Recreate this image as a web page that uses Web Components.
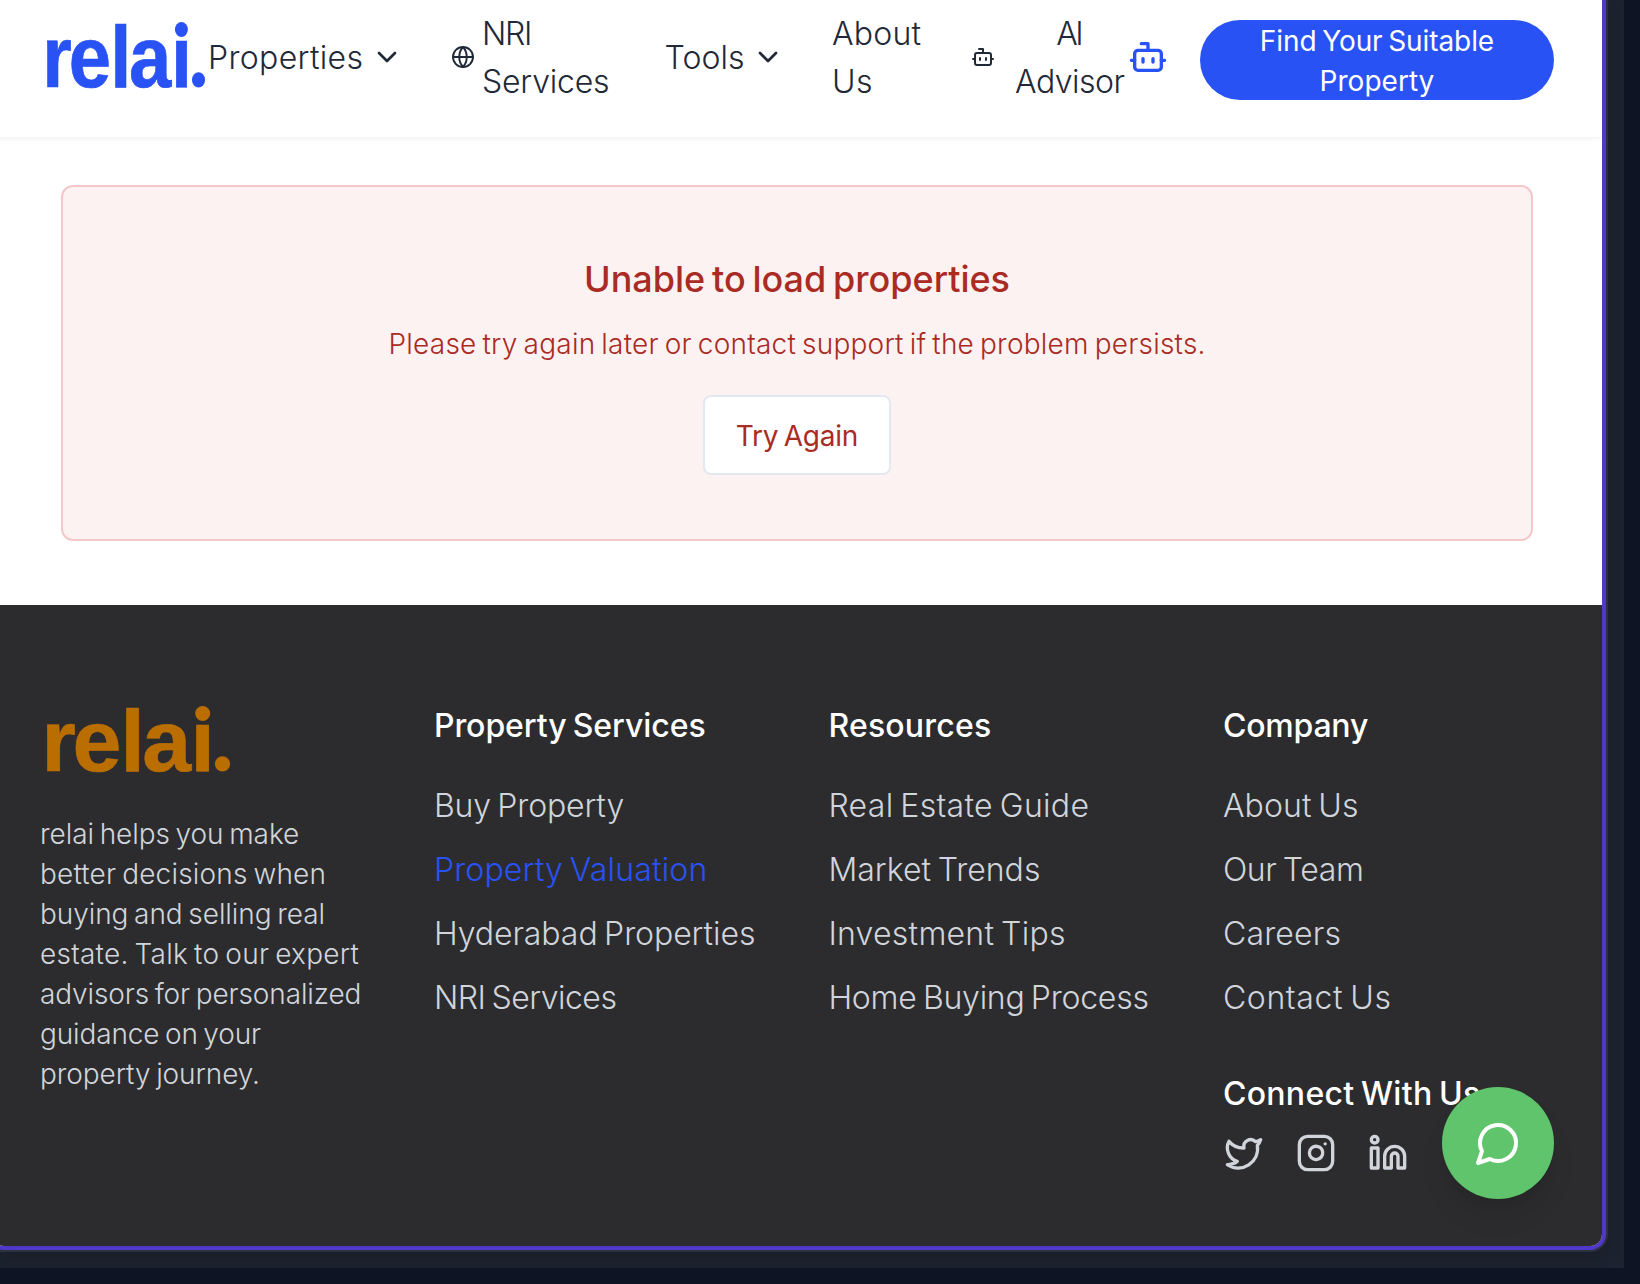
<!DOCTYPE html>
<html lang="en">
<head>
<meta charset="utf-8">
<title>relai.</title>
<style>
  body { margin: 0; background: #0e1423; overflow: hidden; font-family: Inter, "Noto Sans", sans-serif; }
</style>
</head>
<body>
<app-window>
  <site-header></site-header>
  <error-card></error-card>
  <site-footer></site-footer>
  <chat-button></chat-button>
</app-window>

<script>
const define = (name, html, after) => customElements.define(name, class extends HTMLElement {
  connectedCallback() {
    if (this.shadowRoot) return;
    this.attachShadow({ mode: 'open' }).innerHTML = html;
    if (after) after(this);
  }
});

/* One line of text with tight word gaps, tracked so that its drawn width equals the "ink" attribute. */
const WORD_GAP = 0.075;
const ctx = document.createElement('canvas').getContext('2d');
define('fit-text', `<style>
  :host { display: block; white-space: nowrap; font-kerning: normal; word-spacing: -${WORD_GAP}em; transform: translateY(var(--shift, 1px)); }
</style><slot></slot>`, el => {
  const cs = getComputedStyle(el), text = el.textContent;
  ctx.font = `${cs.fontWeight} ${cs.fontSize} Inter`;
  const m = ctx.measureText(text);
  const gaps = (text.split(' ').length - 1) * WORD_GAP * parseFloat(cs.fontSize);
  const ink = m.actualBoundingBoxLeft + m.actualBoundingBoxRight - gaps;
  el.style.letterSpacing = ((el.getAttribute('ink') - ink) / (text.length - 1)).toFixed(3) + 'px';
  el.style.marginRight = (-parseFloat(el.style.letterSpacing)).toFixed(3) + 'px';
});

const icons = {
  chevron: '<path d="m6 9 6 6 6-6"/>',
  globe: '<circle cx="12" cy="12" r="10"/><path d="M12 2c-5 5.6-5 14.4 0 20c5-5.6 5-14.4 0-20"/><path d="M2 12h20"/>',
  bot: '<path d="M12 8V4H8"/><rect width="16" height="12" x="4" y="8" rx="2"/><path d="M2 14h2M20 14h2M15 13v2M9 13v2"/>',
  twitter: '<path d="M22 4s-.7 2.1-2 3.4c1.6 10-9.4 17.3-18 11.6 2.2.1 4.4-.6 6-2C3 15.5.5 9.6 3 5c2.2 2.6 5.6 4.1 9 4-.9-4.2 4-6.6 7-3.8 1.1 0 3-1.2 3-1.2z"/>',
  instagram: '<rect width="20" height="20" x="2" y="2" rx="5"/><path d="M16 11.37A4 4 0 1 1 12.63 8 4 4 0 0 1 16 11.37z"/><path d="M17.5 6.5h.01"/>',
  linkedin: '<path d="M16 8a6 6 0 0 1 6 6v7h-4v-7a2 2 0 0 0-4 0v7h-4v-7a6 6 0 0 1 6-6z"/><rect width="4" height="12" x="2" y="9"/><circle cx="4" cy="4" r="2"/>',
  message: '<path d="M7.9 20A9 9 0 1 0 4 16.1L2 22Z"/>'
};
define('line-icon', '<style>:host{display:block;flex:none}svg{display:block}</style>', el => {
  const s = el.getAttribute('size');
  el.shadowRoot.innerHTML += `<svg width="${s}" height="${s}" viewBox="0 0 24 24" fill="none" stroke="currentColor"
    stroke-width="${el.getAttribute('stroke') || 2}" stroke-linecap="round" stroke-linejoin="round">${icons[el.getAttribute('name')]}</svg>`;
});

/* The wordmark: the i's square dot is clipped away and a round one is drawn in its place. */
define('brand-logo', `<style>
  :host { display: block; flex: none; height: 68px; }
  svg { display: block; width: 100%; height: 100%; overflow: visible; fill: currentColor; }
  text { font: 700 88px "Liberation Sans", sans-serif; stroke: currentColor; stroke-width: .7px; }
  .stop { font-size: 60px; stroke: none; }
</style>
<svg viewBox="0 0 184 68" preserveAspectRatio="none">
  <clipPath id="body"><path d="M-10 -10H147V18H200V80H-10Z"/></clipPath>
  <g clip-path="url(#body)"><text x="-4.4 26.4 74.4 96.2 144.6 168" y="65 65 65 65 65 62">relai<tspan class="stop">.</tspan></text></g>
  <circle cx="156.7" cy="7.5" r="7.5"/><circle cx="176.5" cy="57.8" r="7.6"/>
</svg>`);

define('nav-item', `<style>
  :host { display: flex; align-items: center; flex: none; line-height: 48px; }
</style><slot></slot>`);

define('site-header', `<style>
  :host { display: flex; align-items: center; box-sizing: border-box; height: 137px; padding: 0 0 23px 54px;
    color: #1f2937; font-size: 32px; font-weight: 330; background: #fff; box-shadow: 0 1px 5px rgba(0,0,0,.07); position: relative; }
  brand-logo { width: 159px; color: #2952f5; margin: -2px 3px 0 0; }
  .center { text-align: center; }
  .blue { color: #2952f5; }
  button { display: flex; flex-direction: column; align-items: center; flex: none; width: 354px; height: 80px; margin: 6px 0 0 32px;
    padding: 0; border: 0; border-radius: 40px; background: #2952f5; color: #fff; font: 400 28px/40px Inter, sans-serif; }
</style>
<brand-logo></brand-logo>
<nav-item style="width:195px;gap:8px;margin-right:48px"><fit-text ink="150.5" style="width:155px">Properties</fit-text><line-icon name="chevron" size="32"></line-icon></nav-item>
<nav-item style="width:166px;gap:7px;margin-right:48px"><line-icon name="globe" size="24" stroke="1.9"></line-icon>
  <div><fit-text ink="45">NRI</fit-text><fit-text ink="124">Services</fit-text></div></nav-item>
<nav-item style="width:119px;margin-right:48px"><fit-text ink="77.5" style="width:87.5px;margin-left:-.5px">Tools</fit-text><line-icon name="chevron" size="32"></line-icon></nav-item>
<nav-item style="width:139px"><div><fit-text ink="88.5">About</fit-text><fit-text ink="37">Us</fit-text></div></nav-item>
<nav-item style="width:157px"><line-icon name="bot" size="24" style="margin-left:-.5px"></line-icon>
  <div class="center" style="width:112px;margin-left:19.5px"><fit-text ink="25">AI</fit-text><fit-text ink="109.5">Advisor</fit-text></div></nav-item>
<line-icon class="blue" name="bot" size="40"></line-icon>
<button><fit-text ink="231">Find Your Suitable</fit-text><fit-text ink="112">Property</fit-text></button>`);

define('error-card', `<style>
  :host { display: flex; flex-direction: column; align-items: center; box-sizing: border-box; width: 1472px; height: 356px;
    margin: 48px 0 64px 69px; padding-top: 66px; border: 2px solid #f4c8c8; border-radius: 12px; background: #fcf2f2; color: #a92b24; }
  h2 { margin: 0 0 16px; font: 450 36px/56px Inter, sans-serif; --shift: -2px; }
  p { margin: 0 0 30px; font: 330 28px/40px Inter, sans-serif; --shift: -1px; }
  button { box-sizing: border-box; width: 188px; height: 80px; padding: 0; border: 2px solid #e2e8f0; border-radius: 8px; background: #fff;
    color: inherit; font: 400 28px/40px Inter, sans-serif; display: flex; align-items: center; justify-content: center; }
</style>
<h2><fit-text ink="422.5">Unable to load properties</fit-text></h2>
<p><fit-text ink="813">Please try again later or contact support if the problem persists.</fit-text></p>
<button><fit-text ink="120">Try Again</fit-text></button>`);

define('link-column', `<style>
  :host { display: block; line-height: 48px; font-size: 32px; font-weight: 330; }
  ::slotted(fit-text) { margin-bottom: 16px; margin-left: -.6px; }
  ::slotted(.active) { color: #2952f5; }
  ::slotted(.title) { color: #fff; font-weight: 500; margin-bottom: 32px; }
  ::slotted(.later) { margin-top: 48px; margin-bottom: 16px; }
</style><slot></slot>`);

define('site-footer', `<style>
  :host { display: grid; grid-template-columns: repeat(4, 330px); column-gap: 64.5px; align-items: start; box-sizing: border-box;
    height: 641px; padding: 96px 48px 0; background: #2c2c2e; color: #d1d5db; }
  brand-logo { width: 184px; color: #bb6e00; margin: 5px 0 40px 6px; }
  .about { font-size: 28px; line-height: 40px; font-weight: 330; --shift: 0px; }
  .title { color: #fff; font-weight: 500; }
  .social { display: flex; gap: 32px; }
</style>
<div>
  <brand-logo></brand-logo>
  <div class="about">
    <fit-text ink="256">relai helps you make</fit-text>
    <fit-text ink="282.5">better decisions when</fit-text>
    <fit-text ink="281.5">buying and selling real</fit-text>
    <fit-text ink="317.5">estate. Talk to our expert</fit-text>
    <fit-text ink="318.5">advisors for personalized</fit-text>
    <fit-text ink="220">guidance on your</fit-text>
    <fit-text ink="216">property journey.</fit-text>
  </div>
</div>
<link-column>
  <fit-text class="title" ink="268.5">Property Services</fit-text>
  <fit-text ink="186.5">Buy Property</fit-text>
  <fit-text class="active" ink="268.5">Property Valuation</fit-text>
  <fit-text ink="317">Hyderabad Properties</fit-text>
  <fit-text ink="178.5">NRI Services</fit-text>
</link-column>
<link-column>
  <fit-text class="title" ink="159.5">Resources</fit-text>
  <fit-text ink="256">Real Estate Guide</fit-text>
  <fit-text ink="207.5">Market Trends</fit-text>
  <fit-text ink="232.5">Investment Tips</fit-text>
  <fit-text ink="316">Home Buying Process</fit-text>
</link-column>
<link-column>
  <fit-text class="title" ink="144">Company</fit-text>
  <fit-text ink="134">About Us</fit-text>
  <fit-text ink="137">Our Team</fit-text>
  <fit-text ink="114.5">Careers</fit-text>
  <fit-text ink="164.5">Contact Us</fit-text>
  <fit-text class="title later" ink="255">Connect With Us</fit-text>
  <div class="social">
    <line-icon name="twitter" size="40"></line-icon>
    <line-icon name="instagram" size="40"></line-icon>
    <line-icon name="linkedin" size="40"></line-icon>
  </div>
</link-column>`);

define('chat-button', `<style>
  :host { position: absolute; right: 48px; bottom: 47px; display: flex; align-items: center; justify-content: center; width: 112px; height: 112px;
    border-radius: 50%; background: #5fc46b; color: #fff; box-shadow: 0 20px 30px -6px rgba(0,0,0,.1), 0 8px 12px -8px rgba(0,0,0,.1); }
</style><line-icon name="message" size="48"></line-icon>`);

define('app-window', `<style>
  :host { display: block; box-sizing: border-box; width: 1624px; height: 1268px; background: #1c222f; overflow: hidden; }
  .frame { position: relative; box-sizing: border-box; width: 1618px; height: 1250px; margin-left: -12px; border: 4px solid #5038c8; border-top: 0;
    border-radius: 0 0 16px 16px; background: #fff; overflow: hidden; }
  .ring { box-sizing: border-box; width: 1608px; height: 1252px; border-radius: 0 0 18px 0; background: #2b3140; box-shadow: 0 8px 16px rgba(0,0,0,.12); }
</style><div class="ring"><div class="frame"><slot></slot></div></div>`);
</script>
</body>
</html>
